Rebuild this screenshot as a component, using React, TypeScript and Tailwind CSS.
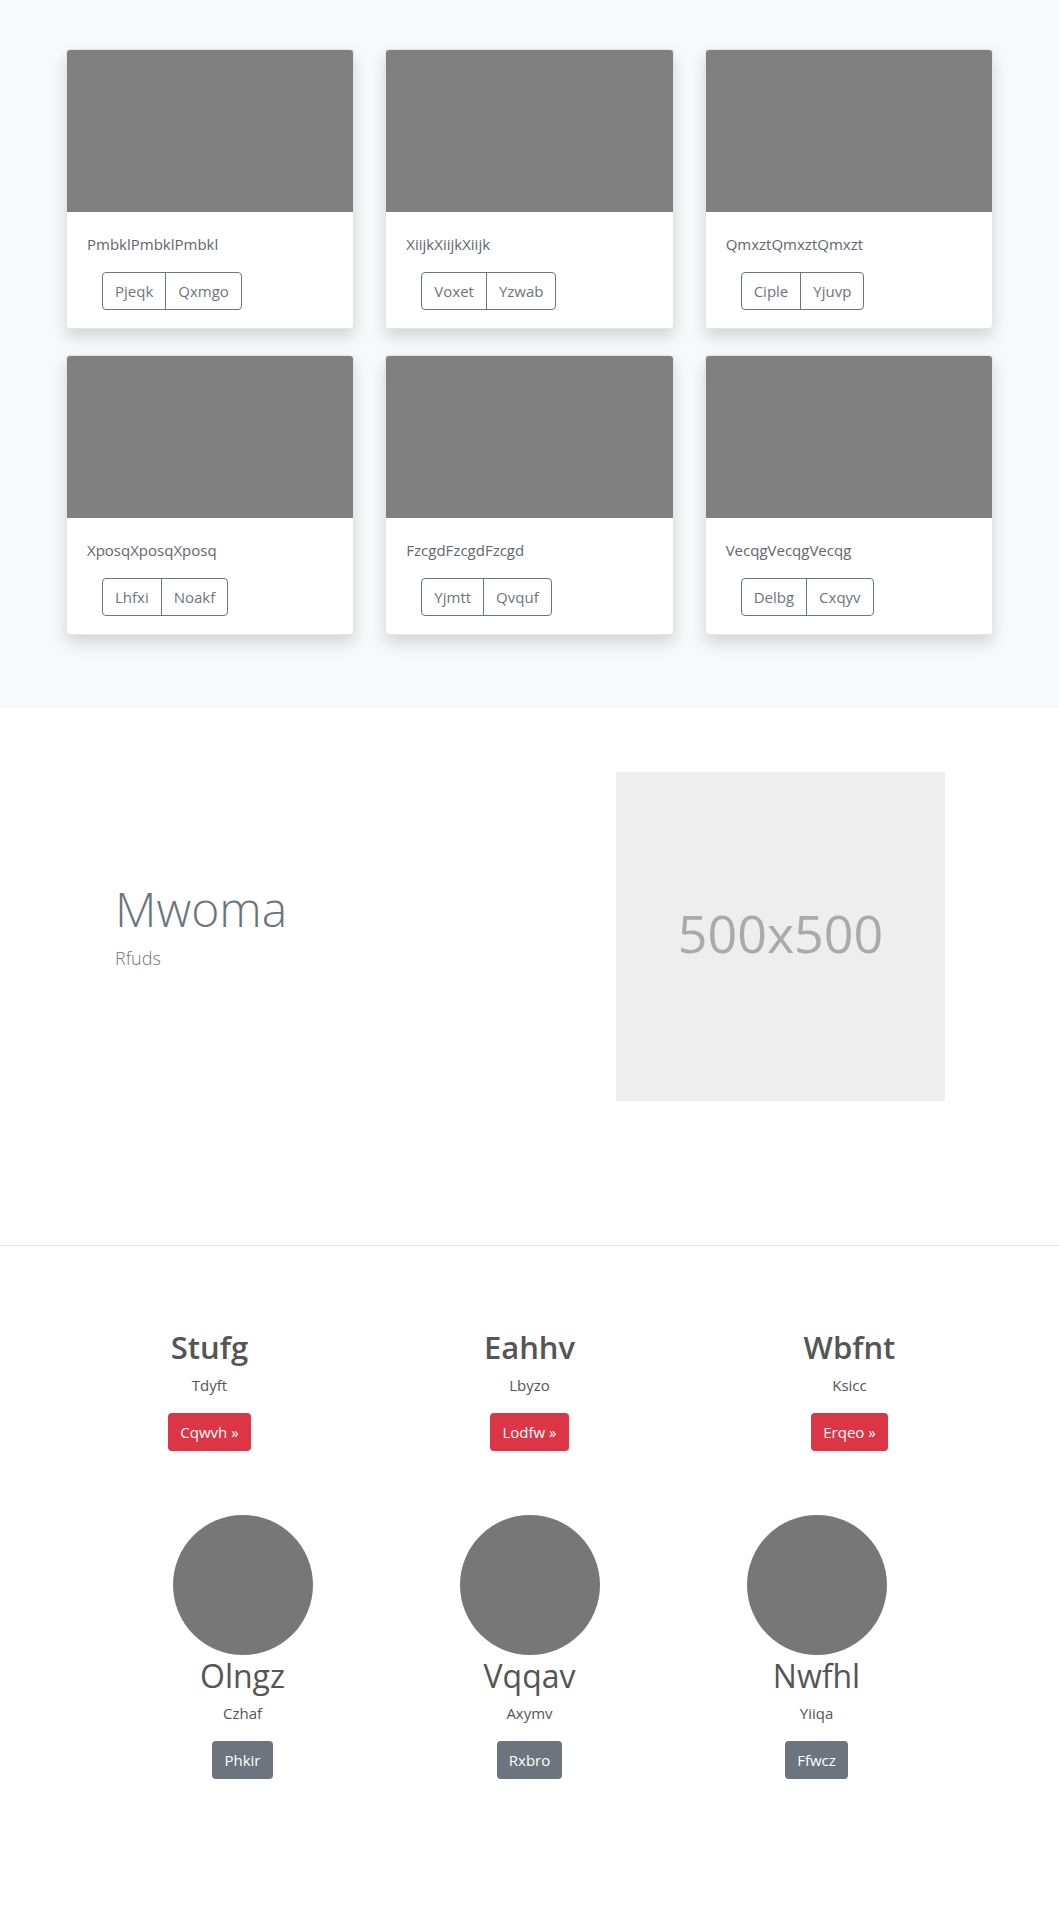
import React from 'react';

const cards = [
  { title: 'PmbklPmbklPmbkl', a: 'Pjeqk', b: 'Qxmgo' },
  { title: 'XiijkXiijkXiijk', a: 'Voxet', b: 'Yzwab' },
  { title: 'QmxztQmxztQmxzt', a: 'Ciple', b: 'Yjuvp' },
  { title: 'XposqXposqXposq', a: 'Lhfxi', b: 'Noakf' },
  { title: 'FzcgdFzcgdFzcgd', a: 'Yjmtt', b: 'Qvquf' },
  { title: 'VecqgVecqgVecqg', a: 'Delbg', b: 'Cxqyv' },
];

const features = [
  { title: 'Stufg', text: 'Tdyft', cta: 'Cqwvh' },
  { title: 'Eahhv', text: 'Lbyzo', cta: 'Lodfw' },
  { title: 'Wbfnt', text: 'Ksicc', cta: 'Erqeo' },
];

const people = [
  { name: 'Olngz', role: 'Czhaf', cta: 'Phkir' },
  { name: 'Vqqav', role: 'Axymv', cta: 'Rxbro' },
  { name: 'Nwfhl', role: 'Yiiqa', cta: 'Ffwcz' },
];

function Card({ title, a, b }: { title: string; a: string; b: string }) {
  return (
    <div className="flex h-[280px] flex-col overflow-hidden rounded border border-black/10 bg-white shadow-[0_8px_16px_rgba(0,0,0,0.15)]">
      <div className="h-[162px] bg-[#808080]" />
      <div className="px-5 pt-5">
        <p className="mb-4 text-[15px] leading-6 text-[#60676e]">{title}</p>
        <div className="ml-[15px] inline-flex rounded border border-[#6c757d] text-[15px] leading-6 text-[#6c757d]">
          <span className="border-r border-[#6c757d] px-3 py-[6px]">{a}</span>
          <span className="px-3 py-[6px]">{b}</span>
        </div>
      </div>
    </div>
  );
}

export default function App() {
  return (
    <div className="min-h-[1920px] bg-white font-['Open_Sans',sans-serif]">
      <section className="bg-[#f8f9fa] pt-[49px] pb-[73px]">
        <div className="mx-auto grid w-[927px] grid-cols-3 gap-x-[31px] gap-y-[26px]">
          {cards.map((c) => (
            <Card key={c.title} {...c} />
          ))}
        </div>
      </section>

      <section className="pt-[64px] pb-[144px]">
        <div className="mx-auto flex w-[927px] items-start">
          <div className="flex-1 pl-[49px] pt-[108px]">
            <h1 className="text-[48px] font-light leading-[1.2] text-[#6c757d]">Mwoma</h1>
            <p className="mt-[7px] text-[18px] font-light leading-[1.5] text-[#6c757d]">Rfuds</p>
          </div>
          <div className="mr-[48px] flex h-[329px] w-[329px] items-center justify-center bg-[#eeeeee]">
            <span className="mb-[8px] text-[52px] text-[#aaaaaa]">500x500</span>
          </div>
        </div>
      </section>

      <section className="border-t border-[#e5e5e5] pt-[83px]">
        <div className="mx-auto grid w-[960px] grid-cols-3">
          {features.map((f) => (
            <div key={f.title} className="flex flex-col items-center">
              <h2 className="mb-2 text-[31px] font-semibold leading-[1.2] text-[#555]">{f.title}</h2>
              <p className="mb-4 text-[15px] leading-[1.5] text-[#555]">{f.text}</p>
              <button className="rounded bg-[#dc3545] px-3 py-[7px] text-[15px] leading-6 text-white">
                {f.cta} »
              </button>
            </div>
          ))}
        </div>

        <div className="mx-auto mt-[64px] grid w-[861px] grid-cols-3">
          {people.map((p) => (
            <div key={p.name} className="flex flex-col items-center">
              <div className="h-[140px] w-[140px] rounded-full bg-[#777777]" />
              <h3 className="mt-[2px] mb-[7px] text-[32px] leading-[1.2] text-[#555]">{p.name}</h3>
              <p className="mb-4 text-[15px] leading-[1.5] text-[#555]">{p.role}</p>
              <button className="rounded bg-[#6c757d] px-3 py-[7px] text-[15px] leading-6 text-white">
                {p.cta}
              </button>
            </div>
          ))}
        </div>
      </section>
    </div>
  );
}
